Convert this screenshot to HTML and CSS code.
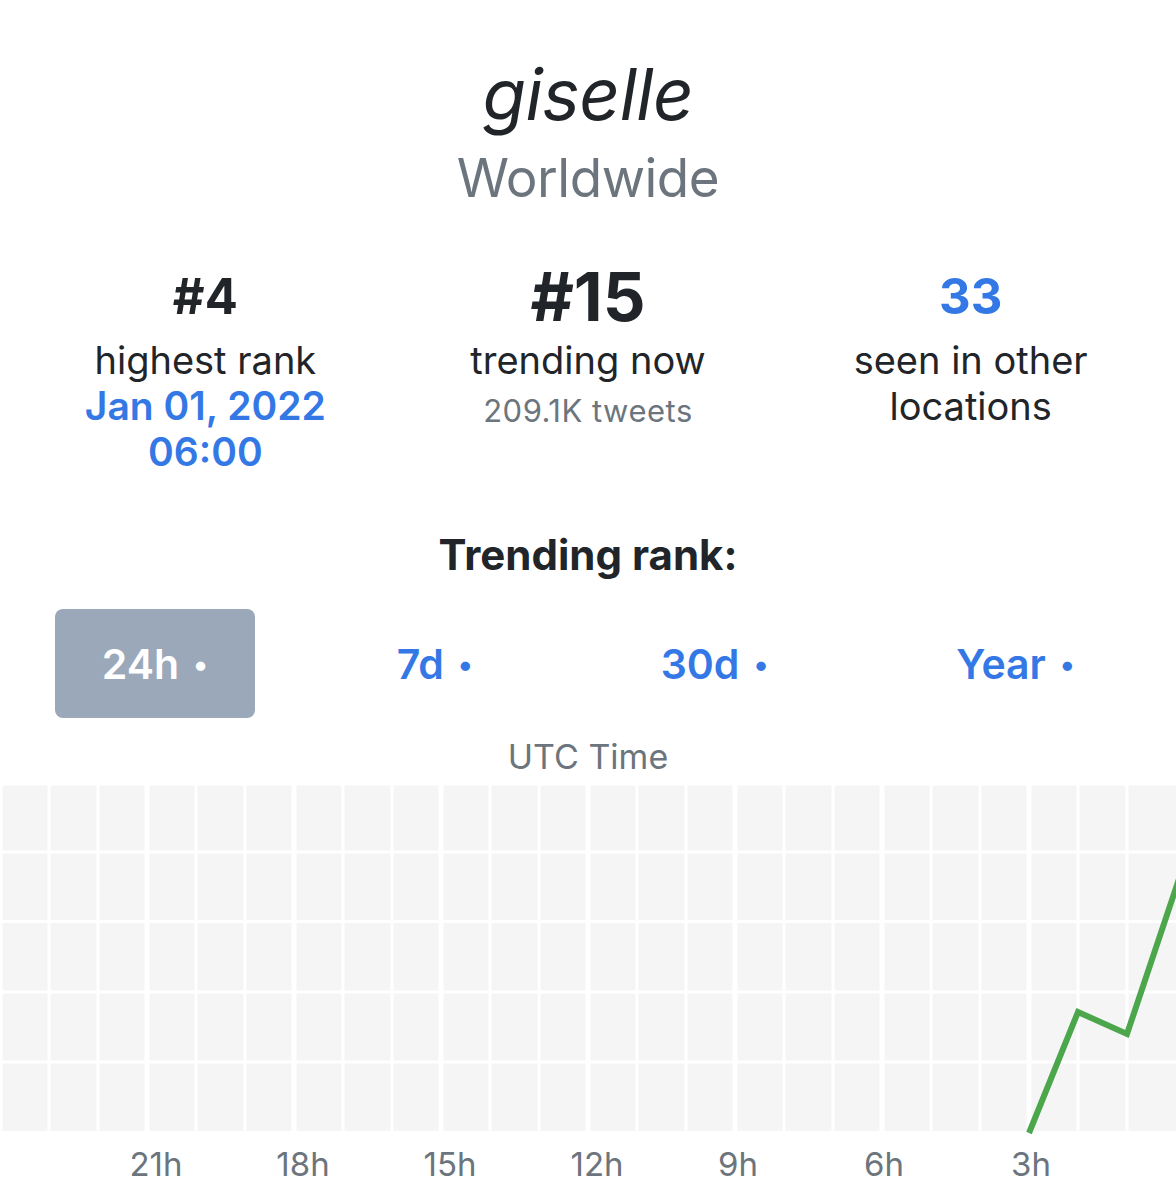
FILE: index.html
```html
<!DOCTYPE html>
<html lang="en">
<head>
<meta charset="utf-8">
<title>giselle – Worldwide</title>
<link rel="stylesheet" href="styles.css">
</head>
<body>
<main class="page">
  <header class="head">
    <h1 class="title">giselle</h1>
    <div class="subtitle">Worldwide</div>
  </header>

  <section class="stats">
    <div class="stat">
      <div class="value">#4</div>
      <div class="label">highest rank</div>
      <div class="date">Jan 01, 2022<br>06:00</div>
    </div>
    <div class="stat">
      <div class="value value-big">#15</div>
      <div class="label">trending now</div>
      <div class="muted">209.1K tweets</div>
    </div>
    <div class="stat">
      <div class="value value-blue">33</div>
      <div class="label">seen in other<br>locations</div>
    </div>
  </section>

  <h2 class="section-title">Trending rank:</h2>

  <nav class="tabs">
    <span class="tab active">24h <span class="dot">•</span></span>
    <span class="tab">7d <span class="dot">•</span></span>
    <span class="tab">30d <span class="dot">•</span></span>
    <span class="tab">Year <span class="dot">•</span></span>
  </nav>

  <div class="axis-title">UTC Time</div>

  <svg class="chart" width="1176" height="416" viewBox="0 0 1176 416" xmlns="http://www.w3.org/2000/svg">
    <rect x="0" y="0" width="1176" height="349" fill="#f5f5f5"/>
    <g stroke="#ffffff">
      <line x1="1" y1="0" x2="1" y2="349" stroke-width="3"/>
      <line x1="49" y1="0" x2="49" y2="349" stroke-width="3"/>
      <line x1="98" y1="0" x2="98" y2="349" stroke-width="3"/>
      <line x1="147" y1="0" x2="147" y2="349" stroke-width="5"/>
      <line x1="196" y1="0" x2="196" y2="349" stroke-width="3"/>
      <line x1="245" y1="0" x2="245" y2="349" stroke-width="3"/>
      <line x1="294" y1="0" x2="294" y2="349" stroke-width="5"/>
      <line x1="343" y1="0" x2="343" y2="349" stroke-width="3"/>
      <line x1="392" y1="0" x2="392" y2="349" stroke-width="3"/>
      <line x1="441" y1="0" x2="441" y2="349" stroke-width="5"/>
      <line x1="490" y1="0" x2="490" y2="349" stroke-width="3"/>
      <line x1="539" y1="0" x2="539" y2="349" stroke-width="3"/>
      <line x1="588" y1="0" x2="588" y2="349" stroke-width="5"/>
      <line x1="637" y1="0" x2="637" y2="349" stroke-width="3"/>
      <line x1="686" y1="0" x2="686" y2="349" stroke-width="3"/>
      <line x1="735" y1="0" x2="735" y2="349" stroke-width="5"/>
      <line x1="784" y1="0" x2="784" y2="349" stroke-width="3"/>
      <line x1="833" y1="0" x2="833" y2="349" stroke-width="3"/>
      <line x1="882" y1="0" x2="882" y2="349" stroke-width="5"/>
      <line x1="931" y1="0" x2="931" y2="349" stroke-width="3"/>
      <line x1="980" y1="0" x2="980" y2="349" stroke-width="3"/>
      <line x1="1029" y1="0" x2="1029" y2="349" stroke-width="5"/>
      <line x1="1078" y1="0" x2="1078" y2="349" stroke-width="3"/>
      <line x1="1127" y1="0" x2="1127" y2="349" stroke-width="3"/>
      <line x1="0" y1="0.5" x2="1176" y2="0.5" stroke-width="2"/>
      <line x1="0" y1="68" x2="1176" y2="68" stroke-width="3"/>
      <line x1="0" y1="137.5" x2="1176" y2="137.5" stroke-width="3"/>
      <line x1="0" y1="208" x2="1176" y2="208" stroke-width="3"/>
      <line x1="0" y1="278" x2="1176" y2="278" stroke-width="3"/>
      <line x1="0" y1="348" x2="1176" y2="348" stroke-width="2"/>
    </g>
    <polyline points="1029,349 1078,228 1127,250 1180,92" fill="none" stroke="#4ca64c" stroke-width="6" stroke-linejoin="miter"/>
    <g class="ticks" text-anchor="middle">
      <text x="156" y="392">21h</text>
      <text x="303" y="392">18h</text>
      <text x="450" y="392">15h</text>
      <text x="597" y="392">12h</text>
      <text x="738" y="392">9h</text>
      <text x="884" y="392">6h</text>
      <text x="1031" y="392">3h</text>
    </g>
  </svg>
</main>
</body>
</html>
```

FILE: styles.css
```css
* { box-sizing: border-box; }

html, body {
  margin: 0;
  padding: 0;
  background: #ffffff;
}

body {
  font-family: "Inter", "Noto Sans", "Liberation Sans", sans-serif;
  color: #212529;
  width: 1176px;
  overflow: hidden;
}

.page {
  display: flex;
  flex-direction: column;
  align-items: stretch;
}

.head {
  text-align: center;
  padding-top: 52px;
}

.title {
  margin: 0;
  font-size: 71px;
  line-height: 84px;
  font-style: italic;
  font-weight: 400;
  color: #212529;
  letter-spacing: -0.5px;
}

.subtitle {
  font-size: 53px;
  line-height: 84px;
  color: #6c757d;
  font-weight: 400;
  letter-spacing: -0.5px;
}

.stats {
  display: grid;
  grid-template-columns: repeat(3, 1fr);
  padding: 0 14px;
  margin-top: 37px;
  text-align: center;
}

.value {
  font-size: 49px;
  line-height: 80px;
  font-weight: 700;
  color: #212529;
}

.value-big {
  font-size: 67px;
}

.value-blue {
  color: #3478e6;
}

.label {
  font-size: 38px;
  line-height: 46px;
  color: #212529;
}

.date {
  font-size: 39px;
  line-height: 46px;
  font-weight: 600;
  color: #3478e6;
}

.muted {
  font-size: 31px;
  line-height: 40px;
  margin-top: 8px;
  color: #6c757d;
  letter-spacing: 0.5px;
}

.section-title {
  margin: 55px 0 0;
  text-align: center;
  font-size: 42px;
  line-height: 50px;
  font-weight: 700;
  color: #212529;
}

.tabs {
  display: flex;
  justify-content: space-between;
  padding: 0 55px;
  margin-top: 29px;
}

.tab {
  height: 109px;
  display: flex;
  align-items: center;
  justify-content: center;
  gap: 14px;
  padding: 0 46px;
  border-radius: 8px;
  font-size: 41px;
  font-weight: 600;
  color: #3478e6;
}

.tab .dot {
  font-size: 30px;
}

.tab.active {
  width: 200px;
  background: #9aa8ba;
  color: #ffffff;
}

.axis-title {
  margin-top: 19px;
  text-align: center;
  font-size: 34px;
  line-height: 40px;
  color: #6c757d;
}

.chart {
  display: block;
  margin-top: 7px;
}

.ticks text {
  font-family: "Inter", "Noto Sans", "Liberation Sans", sans-serif;
  font-size: 33px;
  fill: #6c757d;
}
```
